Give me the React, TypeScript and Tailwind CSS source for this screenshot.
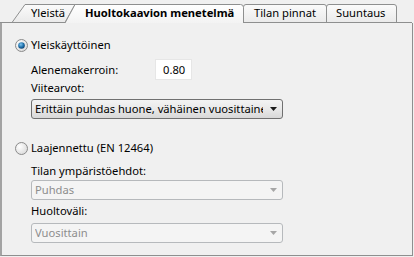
import React from 'react';

// Win7-style radio drawn as svg
function Radio({ checked }: { checked?: boolean }) {
  return (
    <svg width="13" height="13" viewBox="0 0 13 13" aria-hidden="true">
      <defs>
        <radialGradient id={checked ? 'rOn' : 'rOff'} cx="0.35" cy="0.35" r="0.8">
          <stop offset="0" stopColor="#ffffff" />
          <stop offset="1" stopColor="#d6d6d6" />
        </radialGradient>
        <radialGradient id="dot" cx="0.4" cy="0.35" r="0.7">
          <stop offset="0" stopColor="#7fc3ef" />
          <stop offset="0.6" stopColor="#1c6ea8" />
          <stop offset="1" stopColor="#0d3b6a" />
        </radialGradient>
      </defs>
      <circle cx="6.5" cy="6.5" r="6" fill={`url(#${checked ? 'rOn' : 'rOff'})`} stroke="#8b8b8b" />
      {checked && <circle cx="6.5" cy="6.5" r="3.3" fill="url(#dot)" />}
    </svg>
  );
}

function Select({ value, disabled }: { value: string; disabled?: boolean }) {
  return (
    <div
      className={`flex h-[20px] w-[252px] items-center overflow-hidden rounded-[3px] border pl-[3px] ${
        disabled
          ? 'border-[#b6b9bc] bg-[#f4f4f4] text-[#8d8d8d]'
          : 'border-[#707070] bg-gradient-to-b from-[#f3f3f3] via-[#e9e9e9] to-[#d8d8d8] text-black'
      }`}
    >
      <span className="flex-1 overflow-hidden whitespace-nowrap">{value}</span>
      <span className="flex w-[19px] shrink-0 justify-center pl-[2px]">
        <svg width="7" height="4" viewBox="0 0 7 4">
          <path d="M0 0H7L3.5 4Z" fill={disabled ? '#a6a6a6' : '#1b1b1b'} />
        </svg>
      </span>
    </div>
  );
}

export default function App() {
  return (
    <div
      className="h-[257px] w-[414px] overflow-hidden bg-[#f0f0f0] text-[11.2px] leading-[16px] text-black"
      style={{ fontFamily: '"Noto Sans", "Open Sans", sans-serif' }}
    >
      {/* tab strip */}
      <div className="relative h-[23px]">
        <svg className="absolute left-0 top-0" width="414" height="23" aria-hidden="true">
          <defs>
            <linearGradient id="tabIn" x1="0" y1="0" x2="0" y2="1">
              <stop offset="0" stopColor="#fbfbfb" />
              <stop offset="1" stopColor="#eaeaea" />
            </linearGradient>
            <linearGradient id="tabOn" x1="0" y1="0" x2="0" y2="1">
              <stop offset="0" stopColor="#ffffff" />
              <stop offset="1" stopColor="#f3f3f3" />
            </linearGradient>
          </defs>
          <path d="M12 22.5L25 4.5H75L65 22.5Z" fill="url(#tabIn)" stroke="#8e8f8f" />
          <path d="M243.5 22.5V7Q243.5 4.5 246 4.5H324Q326.5 4.5 326.5 7V22.5Z" fill="url(#tabIn)" stroke="#8e8f8f" />
          <path d="M326.5 22.5V7Q326.5 4.5 329 4.5H394Q396.5 4.5 396.5 7V22.5Z" fill="url(#tabIn)" stroke="#8e8f8f" />
          <path d="M0 22.5H65.5M243 22.5H412" stroke="#8e8f8f" />
          <path d="M65 23L75 4.5H240.5Q243.5 4.5 243.5 7.5V23Z" fill="url(#tabOn)" />
          <path d="M65 23L75 4.5H240.5Q243.5 4.5 243.5 7.5V23" fill="none" stroke="#8e8f8f" />
        </svg>
        <div className="relative flex pt-[5px] whitespace-nowrap">
          <span className="ml-[31px] w-[54px]">Yleistä</span>
          <span className="w-[169px] font-bold">Huoltokaavion menetelmä</span>
          <span className="w-[82px]">Tilan pinnat</span>
          <span>Suuntaus</span>
        </div>
      </div>

      {/* page */}
      <div className="flex h-[233px] w-[413px] flex-col border-b border-l-2 border-r border-[#8e8f8f] border-l-[#a3a3a3] pl-[13px] pt-[14px]">
        <label className="flex h-[16px] items-center gap-[3px]">
          <Radio checked />
          <span>Yleiskäyttöinen</span>
        </label>

        <div className="ml-[16px] mt-[6px] flex h-[21px] items-center">
          <span className="w-[124px]">Alenemakerroin:</span>
          <div className="flex h-[21px] w-[37px] items-center border border-[#e6e6e6] bg-white pl-[7px]">0.80</div>
        </div>
        <span className="ml-[16px] mt-0">Viitearvot:</span>
        <div className="ml-[16px] mt-[3px]">
          <Select value="Erittäin puhdas huone, vähäinen vuosittainen kä" />
        </div>

        <label className="mt-[21px] flex h-[16px] items-center gap-[3px]">
          <Radio />
          <span>Laajennettu (EN 12464)</span>
        </label>
        <span className="ml-[16px] mt-[7px]">Tilan ympäristöehdot:</span>
        <div className="ml-[16px] mt-[1px]">
          <Select value="Puhdas" disabled />
        </div>
        <span className="ml-[16px] mt-[3px]">Huoltoväli:</span>
        <div className="ml-[16px] mt-[4px]">
          <Select value="Vuosittain" disabled />
        </div>
      </div>
    </div>
  );
}
